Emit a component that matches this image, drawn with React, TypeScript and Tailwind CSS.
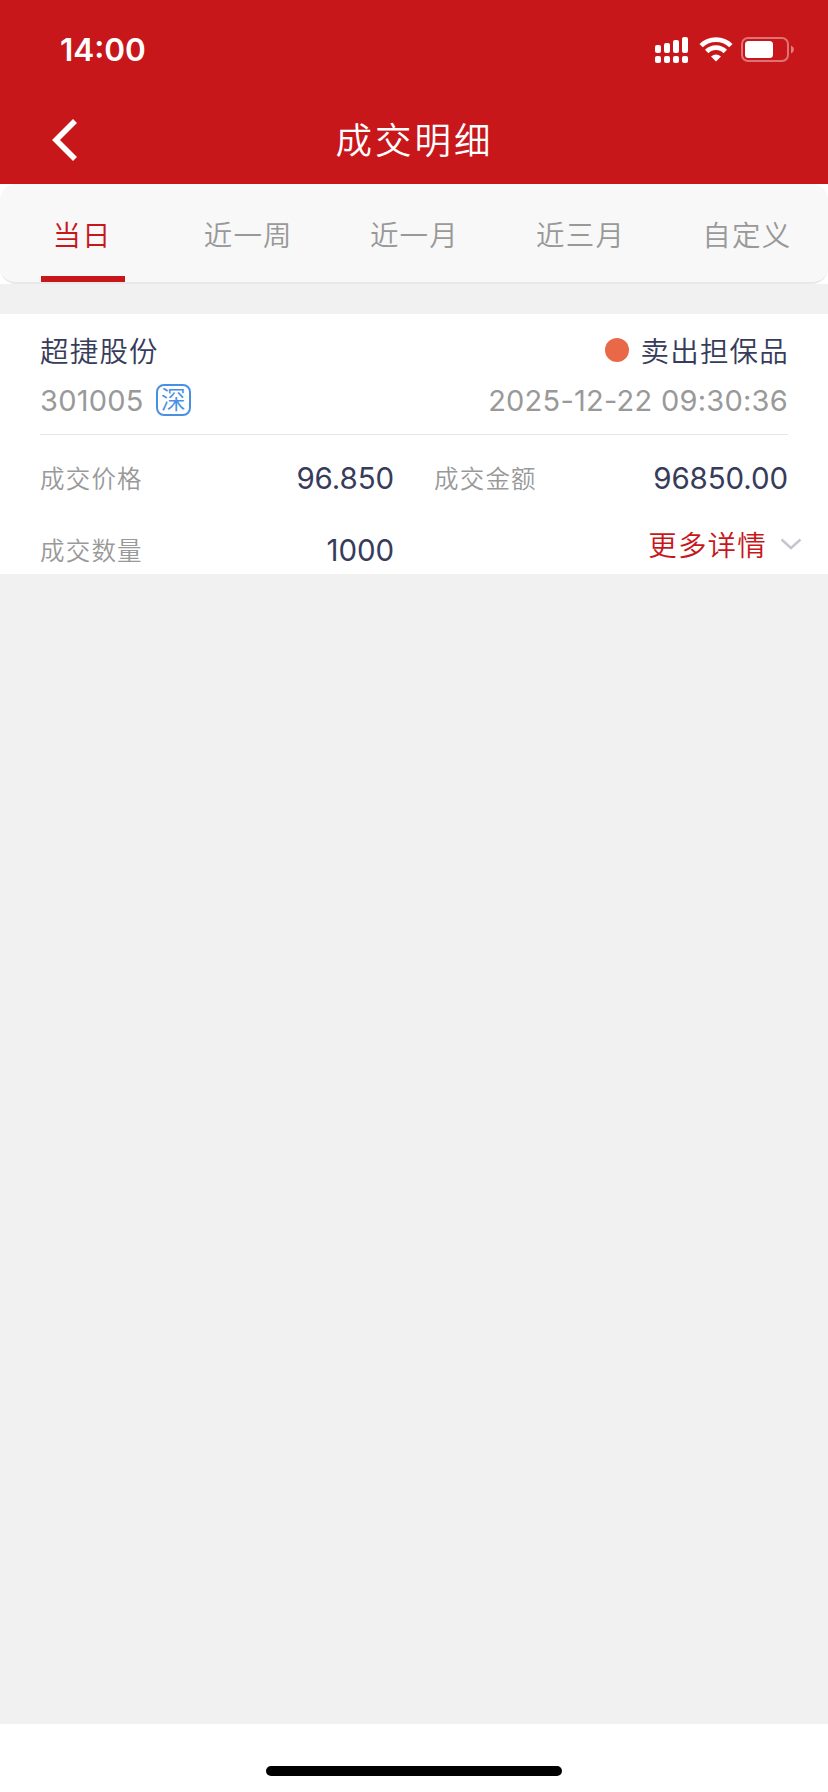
import React from 'react';

interface Field {
  label: string;
  value: string;
}

const tabs = ['当日', '近一周', '近一月', '近三月', '自定义'];

const price: Field = { label: '成交价格', value: '96.850' };
const amount: Field = { label: '成交金额', value: '96850.00' };
const quantity: Field = { label: '成交数量', value: '1000' };

const SignalIcon = () => (
  <svg width="34" height="28" viewBox="0 0 34 28" fill="currentColor">
    <rect x="0" y="9" width="6" height="8" rx="2" />
    <rect x="9" y="7" width="6" height="10" rx="2" />
    <rect x="18" y="4" width="6" height="13" rx="2" />
    <rect x="27" y="1" width="6" height="16" rx="2" />
    <rect x="0" y="20" width="6" height="7" rx="2" />
    <rect x="9" y="20" width="6" height="7" rx="2" />
    <rect x="18" y="20" width="6" height="7" rx="2" />
    <rect x="27" y="20" width="6" height="7" rx="2" />
  </svg>
);

const WifiIcon = () => (
  <svg width="34" height="28" viewBox="0 0 34 28">
    <g fill="none" stroke="currentColor" strokeWidth="4.8">
      <path d="M2.1 9.6A21.4 21.4 0 0 1 31.9 9.6" />
      <path d="M7.7 15.5A13.2 13.2 0 0 1 26.3 15.5" />
    </g>
    <path d="M12 20.4Q17 16.6 22 20.4L17 25.4Z" fill="currentColor" />
  </svg>
);

const BatteryIcon = () => (
  <svg width="54" height="26" viewBox="0 0 54 26">
    <rect x="1" y="1" width="46" height="23" rx="6" fill="none" stroke="white" strokeOpacity="0.4" strokeWidth="2" />
    <rect x="4" y="4" width="28" height="17" rx="3.5" fill="white" />
    <path d="M50 8.5Q53 9.8 53 12.5T50 16.5Z" fill="white" fillOpacity="0.45" />
  </svg>
);

const FieldRow: React.FC<Field> = ({ label, value }) => (
  <div className="flex items-center justify-between">
    <span className="pt-[2px] text-[24.5px] font-[350] tracking-[1.2px] text-[#999999]">{label}</span>
    <span className="pt-[2px] text-[29.5px] tracking-[-0.1px] text-[#363c5a]">{value}</span>
  </div>
);

const App: React.FC = () => {
  return (
    <div className="flex h-[1792px] w-[828px] flex-col bg-[#f1f1f1] font-['Inter','Noto_Sans_CJK_SC',sans-serif] leading-none">
      <header className="h-[184px] bg-[#c8171b] text-white">
        <div className="flex h-[100px] items-center justify-between pl-[60px] pr-[33px]">
          <span className="text-[31.5px] font-semibold">14:00</span>
          <div className="flex items-center">
            <SignalIcon />
            <span className="ml-[10px] flex">
              <WifiIcon />
            </span>
            <span className="ml-[8px] flex">
              <BatteryIcon />
            </span>
          </div>
        </div>
        <div className="grid h-[80px] grid-cols-3 items-center">
          <svg className="ml-[50px]" width="28" height="44" viewBox="0 0 28 44" fill="none" stroke="currentColor" strokeWidth="5.6">
            <path d="M25 3L6 22L25 41" />
          </svg>
          <h1 className="pl-px pt-[3px] text-center text-[36.5px] font-[350] tracking-[3px]">成交明细</h1>
        </div>
      </header>

      <div className="bg-white">
        <nav className="flex h-[100px] overflow-hidden rounded-2xl border-b-2 border-[#e8e8e8] bg-[#f8f8f8]">
          {tabs.map((tab, index) => (
            <div key={tab} className="flex w-[166.2px] shrink-0 flex-col items-center">
              <span
                className={
                  index === 0
                    ? 'flex h-[92px] items-center pr-[2px] pt-[12px] text-[28.5px] font-[350] tracking-[1.2px] text-[#c8171b]'
                    : 'flex h-[92px] items-center pr-[2px] pt-[12px] text-[28.5px] font-[350] tracking-[1.2px] text-[#999999]'
                }
              >
                {tab}
              </span>
              {index === 0 && <div className="h-[6px] w-[84px] bg-[#c8171b]" />}
            </div>
          ))}
        </nav>
      </div>

      <section className="mt-[30px] h-[260px] bg-white px-[40px]">
        <div className="flex h-[121px] flex-col border-b border-[#e6e6e6] pt-[11px]">
          <div className="flex h-[50px] items-center justify-between text-[28.5px] font-[350] tracking-[1.2px] text-[#363c5a]">
            <span className="pt-[4px]">超捷股份</span>
            <span className="-mr-px flex items-center">
              <span className="mr-[11px] size-6 rounded-full bg-[#e96848]" />
              <span className="pt-[4px]">卖出担保品</span>
            </span>
          </div>
          <div className="flex h-[50px] items-center justify-between text-[29px] tracking-[0.25px] text-[#999999]">
            <span className="flex items-center">
              301005
              <span className="ml-[12px] mt-[-1px] flex h-[32px] w-[35px] items-center justify-center rounded-lg border-2 border-[#4a90e2] pt-[2px] text-[25px] font-[350] tracking-normal text-[#4a90e2]">
                深
              </span>
            </span>
            <span>2025-12-22 09:30:36</span>
          </div>
        </div>
        <div className="grid grid-cols-[354px_354px] gap-x-[40px] pt-[7px]">
          <div className="grid auto-rows-[72px]">
            <FieldRow {...price} />
            <FieldRow {...quantity} />
          </div>
          <div className="grid auto-rows-[72px]">
            <FieldRow {...amount} />
            <div className="-mr-[14px] flex items-center justify-end pb-[12px]">
              <span className="pt-[4px] text-[28.5px] font-[350] tracking-[1.2px] text-[#c8171b]">更多详情</span>
              <svg className="ml-[13px]" width="22" height="14" viewBox="0 0 22 14" fill="none" stroke="#c5c7d0" strokeWidth="2.5">
                <path d="M1.5 2.5L11 11L20.5 2.5" />
              </svg>
            </div>
          </div>
        </div>
      </section>

      <footer className="mt-auto flex h-[68px] justify-center bg-white pt-[42px]">
        <div className="h-[10px] w-[296px] rounded-full bg-black" />
      </footer>
    </div>
  );
};

export default App;
